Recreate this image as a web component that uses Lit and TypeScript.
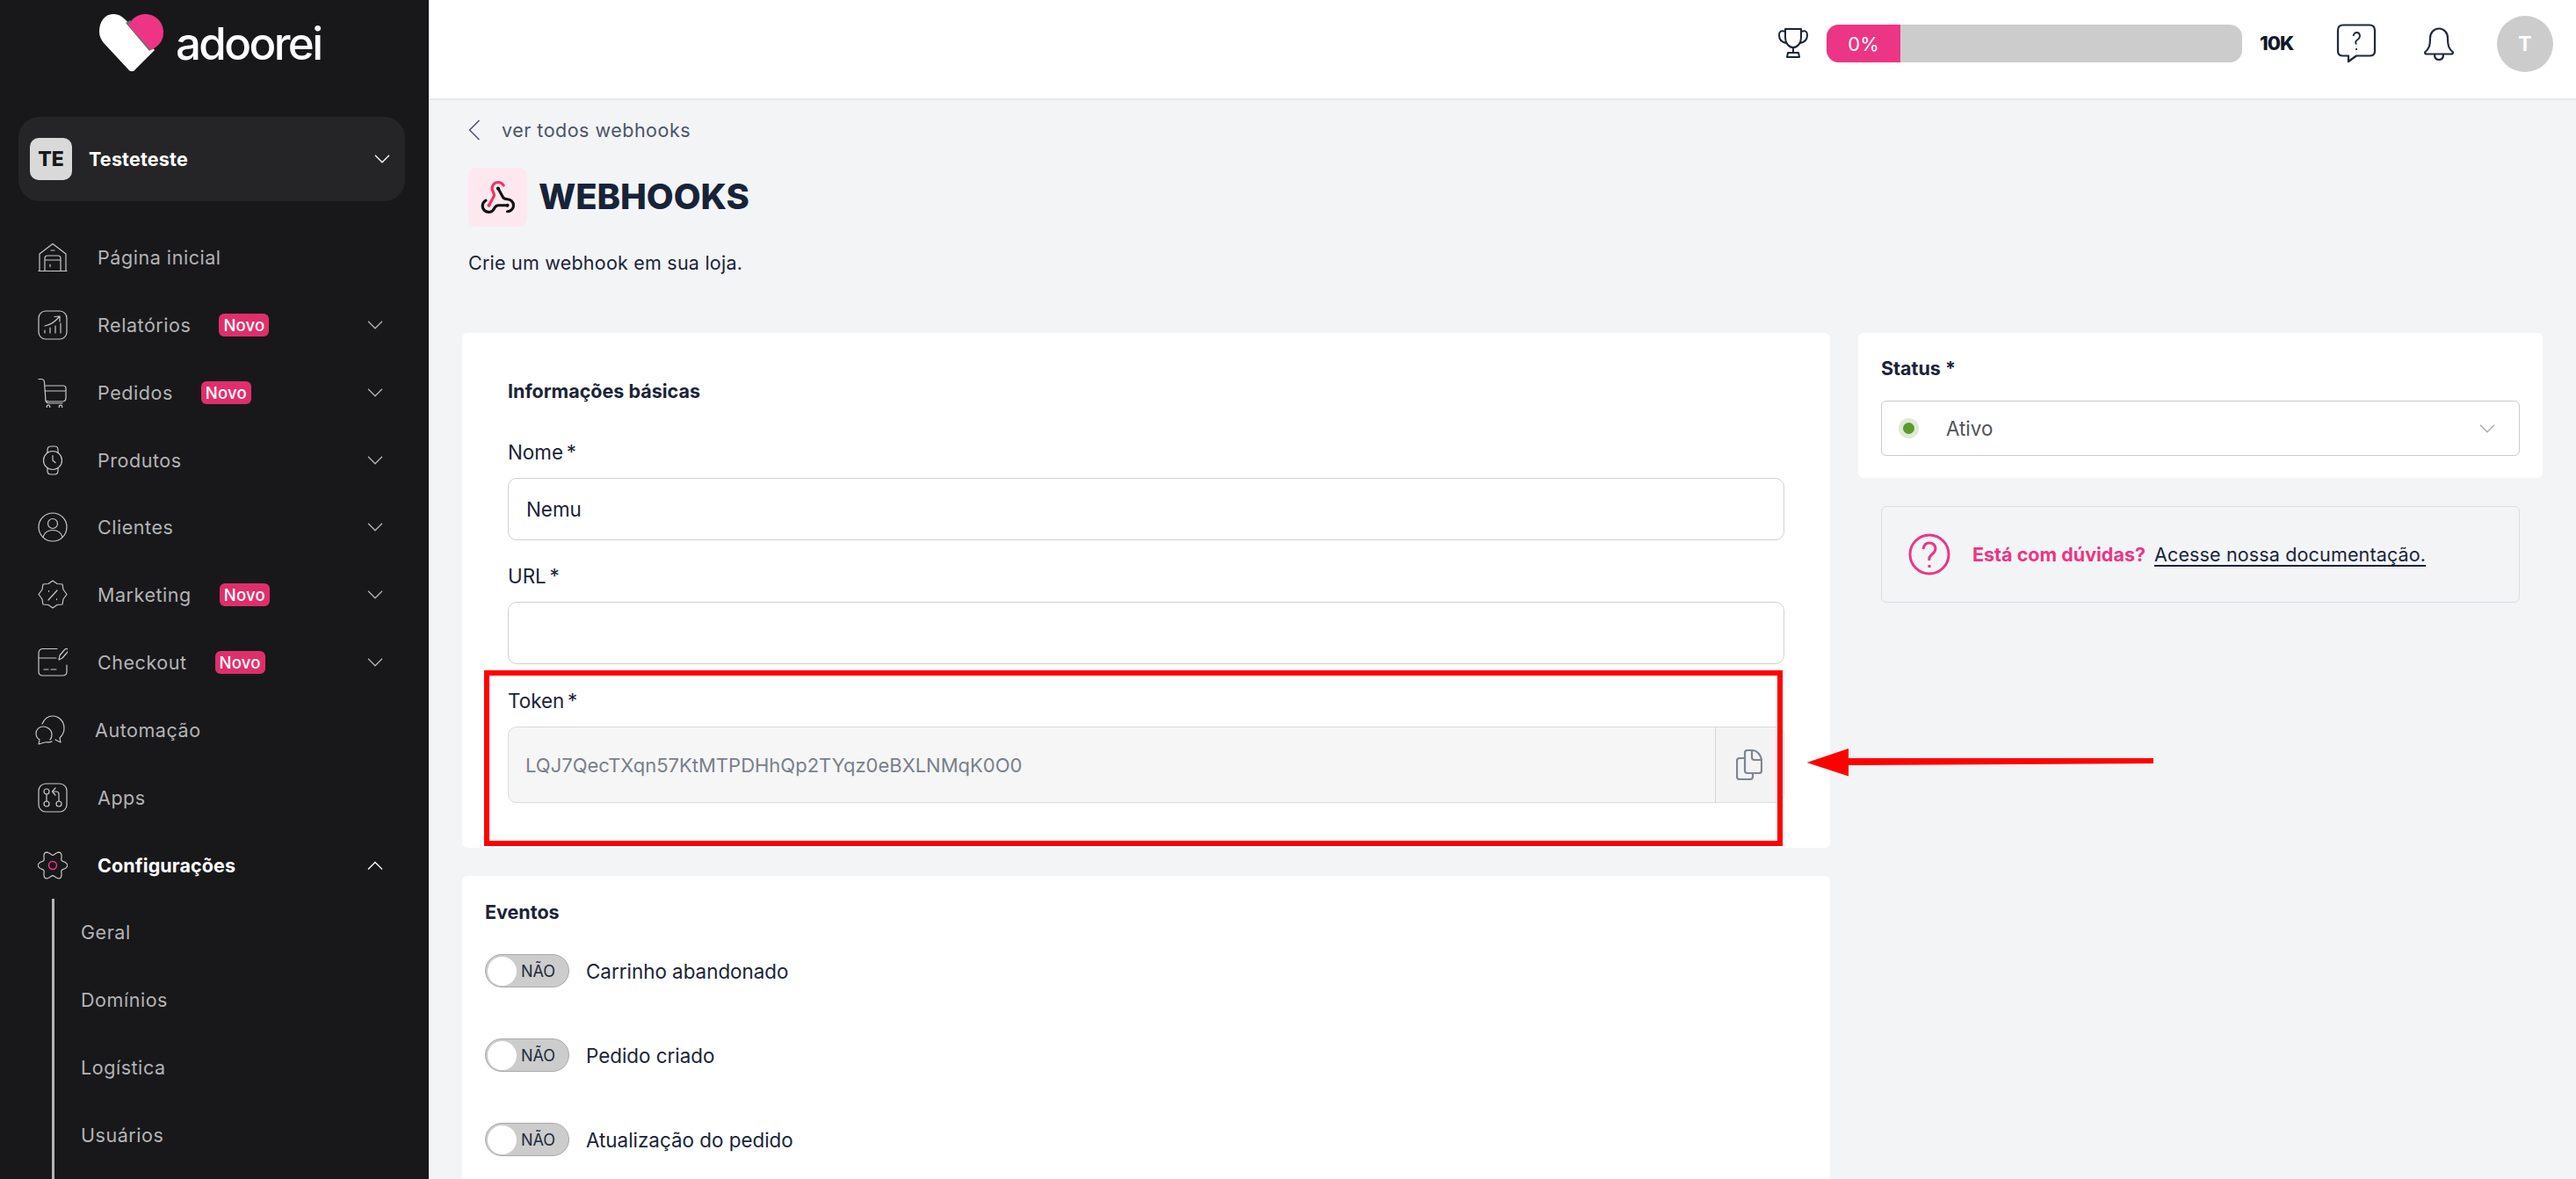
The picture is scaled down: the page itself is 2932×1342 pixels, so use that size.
import { LitElement, html, css, svg } from "lit";
import { customElement } from "lit/decorators.js";

const chev = (cls: string, up = false) => html`<svg class=${cls} viewBox="0 0 18 10" fill="none" stroke="currentColor" stroke-width="1.3"><path d=${up ? "M1 9.5 9 1.5l8 8" : "M1 .8l8 8 8-8"}/></svg>`;

const cogPath = () => {
  const pts: string[] = [];
  for (let d = 0; d < 360; d += 5) {
    const a = (d * Math.PI) / 180;
    const r = 14.2 + 2.6 * Math.cos(6 * a);
    pts.push(`${(17 + r * Math.cos(a)).toFixed(2)} ${(17 + r * Math.sin(a)).toFixed(2)}`);
  }
  return "M" + pts.join("L") + "Z";
};

const icons: Record<string, any> = {
  home: svg`<path d="M1 32.5h32M2 32.5V13L17 1.5 32 13v19.5"/><path d="M15 9h4M8 32.5V18q0-3 3-3h12q3 0 3 3v14.5M8 20h18M14 25v2.5"/>`,
  chart: svg`<rect x="1" y="1" width="32" height="32" rx="8"/><path d="M8 26v-3M14 26v-6M20 26v-8M26 26V15M8 18c6-1 11-4 16-10M19 7.500l6-.5v6"/>`,
  cart: svg`<path d="M1 1.500h3q3 0 3.500 3.500L9 26q.5 3 4 3h15M8 9h21q3 0 3 3v11q0 4-4 4H13q-4 0-4.500-2M8 15h24"/><circle cx="12" cy="33" r="1.800"/><circle cx="26" cy="33" r="1.800"/>`,
  watch: svg`<circle cx="17" cy="17" r="10.500"/><path d="M17 11.500V17l3 2.500M11 8.500V5q0-4 4-4h4q4 0 4 4v3.500M11 25.500V29q0 4 4 4h4q4 0 4-4v-3.500"/>`,
  user: svg`<circle cx="17" cy="17" r="16"/><circle cx="17" cy="13" r="5.500"/><path d="M6 28c2-6 6-7.500 11-7.500s9 1.500 11 7.500"/>`,
  badge: svg`<path d="M17 1l5 3.500 6 .5 1 6 4 5.500-4 5.500-1 6-6 .5-5 3.500-5-3.500-6-.5-1-6-4-5.500 4-5.500 1-6 6-.5z"/><path d="M12 23l10-11M12.500 12.500v.8M21.500 21.800v.8"/>`,
  card: svg`<path d="M22 1.500H6Q1 1.500 1 6.500v21q0 4.500 5 4.500h22q5 0 5-4.500V20M1 12h20M7 25h5M15 25h6M24 14l1-5 6-7q2-1.500 3 0t0 3l-6 7z"/>`,
  chat: svg`<path d="M8 10C11 3 16 1 20 1c7 0 13 6 13 14 0 5-2 8-5 11l1 5-6-3M19 30C16 32 12 30 11 31l-7 2 1-5c-3-2-4-5-4-7 0-5 4-8 8-8s10 3 10 9c0 3-1 5-2 6"/>`,
  apps: svg`<rect x="1" y="1" width="32" height="32" rx="8"/><circle cx="10" cy="10" r="3"/><circle cx="10" cy="24" r="3"/><circle cx="24" cy="24" r="3"/><path d="M10 13v8M24 21v-8q0-3-3-3h-3M20 6l-3.500 4 3.500 4"/>`,
  cog: svg`<path d=${cogPath()}/>`,
};

const ic = (n: string) => html`<svg class="ic" viewBox="0 0 34 34" fill="none" stroke="currentColor" stroke-width="1.200" stroke-linecap="round" stroke-linejoin="round">${icons[n]}${n === "cog" ? svg`<circle cx="17" cy="17" r="4.500" stroke="#ec3585" stroke-width="1.500"/>` : ""}</svg>`;

const nav = [
  { t: "Página inicial", i: "home" },
  { t: "Relatórios", i: "chart", novo: true, more: true },
  { t: "Pedidos", i: "cart", novo: true, more: true },
  { t: "Produtos", i: "watch", more: true },
  { t: "Clientes", i: "user", more: true },
  { t: "Marketing", i: "badge", novo: true, more: true },
  { t: "Checkout", i: "card", novo: true, more: true },
  { t: "Automação", i: "chat", nudge: true },
  { t: "Apps", i: "apps" },
];
const sub = ["Geral", "Domínios", "Logística", "Usuários"];
const events = ["Carrinho abandonado", "Pedido criado", "Atualização do pedido"];

@customElement("app-root")
export class AppRoot extends LitElement {
  static styles = css`
    :host { display: block; width: 2932px; height: 1342px; overflow: hidden; font-family: "Inter", sans-serif; color: #1a2438; background: #f3f4f6; }
    * { box-sizing: border-box; }
    .page { display: flex; height: 1342px; }
    .side { width: 488px; flex: none; background: #18181b; display: flex; flex-direction: column; height: 1342px; overflow: hidden; color: #b4b4b4; }
    .logo { height: 133px; flex: none; display: flex; align-items: flex-start; padding: 14px 0 0 113px; gap: 13px; }
    .logo svg { width: 74px; height: 70px; }
    .logo span { font-size: 51px; font-weight: 500; color: #fff; letter-spacing: -2.6px; line-height: 70px; margin-top: 1px; }
    .acct { margin-left: 21px; width: 440px; height: 96px; flex: none; background: #252528; border-radius: 24px; display: flex; align-items: center; padding: 0 17px 0 13px; color: #fff; }
    .av { width: 48px; height: 48px; border-radius: 10px; background: #d9d9d9; color: #18181b; font-weight: 800; font-size: 23px; display: flex; align-items: center; justify-content: center; }
    .acct b { margin-left: 19px; font-size: 21.500px; font-weight: 700; letter-spacing: .2px; }
    .cv { width: 18px; height: 10px; margin-left: auto; flex: none; }
    nav { margin-top: 25.6px; flex: 1; display: flex; flex-direction: column; min-height: 0; }
    .item { height: 76.85px; flex: none; display: flex; align-items: center; padding: 0 52px 0 43px; font-size: 21.5px; font-weight: 400; letter-spacing: .55px; }
    .item.nudge { padding-left: 40px; }
    .ic { width: 34px; height: 34px; flex: none; margin-right: 34px; color: #c9c9c9; }
    .novo { margin-left: 32px; background: #df2f6b; color: #fff; height: 26px; width: 57px; border-radius: 6px; font-size: 18.500px; font-weight: 500; display: flex; align-items: center; justify-content: center; letter-spacing: .2px; }
    .act { color: #fff; font-weight: 700; letter-spacing: .12px; }
    .sub { flex: 1; margin-left: 59px; border-left: 3px solid #b4b4b4; padding-left: 30px; }
    .sub div { height: 76.85px; display: flex; align-items: center; font-size: 21.500px; letter-spacing: .55px; }
    .main { flex: 1; min-width: 0; display: flex; flex-direction: column; }
    .top { height: 114px; flex: none; background: #fff; border-bottom: 2px solid #e8e9ec; display: flex; align-items: flex-start; padding-left: 1536px; position: relative; }
    .trophy { width: 34px; height: 36px; margin-top: 31px; color: #1a2438; }
    .bar { margin: 28px 0 0 21px; width: 473px; height: 43px; border-radius: 14px; background: #ccc; overflow: hidden; }
    .bar div { width: 84px; height: 43px; background: #ec3585; color: #fff; font-size: 22px; display: flex; align-items: center; justify-content: center; }
    .ten { margin: 35px 0 0 20px; width: 40px; font-size: 22px; font-weight: 800; line-height: 28px; letter-spacing: -1px; color: #111827; }
    .q { width: 46px; height: 45px; margin: 27px 0 0 47px; }
    .bell { width: 36px; height: 38px; margin: 31px 0 0 53px; }
    .me { width: 64px; height: 64px; margin: 18px 0 0 48px; border-radius: 50%; background: #ccc; color: #fff; font-weight: 700; font-size: 23px; display: flex; align-items: center; justify-content: center; }
    .content { flex: 1; min-height: 0; padding: 0 38px; overflow: hidden; }
    .back { margin: 22px 0 0 7px; height: 24px; display: flex; align-items: center; font-size: 21.500px; color: #4a5568; letter-spacing: .5px; }
    .back svg { width: 14px; height: 24px; margin-right: 24px; }
    .title { margin: 31px 0 0 7px; display: flex; align-items: center; gap: 13px; }
    .hk { width: 67px; height: 67px; background: #fde8ef; border-radius: 8px; display: flex; align-items: center; justify-content: center; }
    .hk svg { width: 42px; height: 42px; }
    h1 { margin: -2px 0 0; font-size: 40px; line-height: 50px; font-weight: 800; color: #172338; letter-spacing: -.1px; }
    .desc { margin: 26px 0 0 7px; font-size: 21.500px; line-height: 30px; letter-spacing: .22px; }
    .grid { margin-top: 65px; display: grid; grid-template-columns: 1557px 779px; gap: 32px; align-items: start; }
    .col { display: flex; flex-direction: column; gap: 32px; }
    .card { background: #fff; border-radius: 6px; position: relative; }
    .info { padding: 51px 52px; }
    h3 { margin: 0; font-size: 21.500px; line-height: 30px; font-weight: 700; color: #1a2438; }
    label { display: block; font-size: 22.400px; line-height: 30px; word-spacing: -2.5px; }
    .nome { margin-top: 40px; }
    .url { margin-top: 26px; }
    .tok { margin-top: 27px; }
    .in { height: 71px; border: 1.500px solid #cfd1d4; border-radius: 10px; display: flex; align-items: center; padding-left: 20px; font-size: 22.400px; margin-top: 14px; }
    .tokbox { height: 87px; border: 1.500px solid #dcdcdc; border-radius: 10px; background: #f6f6f6; display: flex; margin-top: 14px; overflow: hidden; color: #7a7f8a; font-size: 22px; }
    .tokbox span { flex: 1; display: flex; align-items: center; padding-left: 19px; }
    .copy { width: 78px; border-left: 1.500px solid #d5d5d5; display: flex; align-items: center; justify-content: center; background: #f3f3f3; }
    .copy svg { width: 30px; height: 35px; margin-right: 2px; }
    .red { position: absolute; left: 25px; top: 384px; width: 1478px; height: 200px; border: 6px solid #ff0000; pointer-events: none; }
    .ev { padding: 26px 26px 60px; height: 500px; }
    .row { display: flex; align-items: center; height: 38px; margin-bottom: 58px; font-size: 22.400px; }
    .row:first-of-type { margin-top: 33px; }
    .tg { width: 96px; height: 38px; border-radius: 19px; background: #ccc; border: 1.500px solid #aaa; display: flex; align-items: center; padding-left: 2px; margin-right: 19px; font-size: 18px; color: #1f2a3c; }
    .tg i { width: 33px; height: 33px; border-radius: 50%; background: #fff; margin-right: 5px; flex: none; }
    .st { padding: 25px 26px 25px; }
    .sel { height: 63px; margin-top: 22px; border: 1.500px solid #cbcbcb; border-radius: 6px; display: flex; align-items: center; padding: 0 27px 0 19px; color: #52525b; font-size: 22.400px; }
    .dot { width: 23px; height: 23px; border-radius: 50%; background: #dfe9d6; display: flex; align-items: center; justify-content: center; margin-right: 31px; }
    .dot i { width: 13px; height: 13px; border-radius: 50%; background: #5b9a2a; }
    .sel .cv { color: #a8a8a8; }
    .help { margin: 0 26px; height: 110px; border: 1.500px solid #dcdee1; border-radius: 6px; display: flex; align-items: center; padding-left: 30px; font-size: 21.500px; }
    .help svg { width: 48px; height: 48px; margin-right: 25px; }
    .help b { color: #ec3585; font-weight: 700; margin-right: 10px; }
    .help a { color: #1a2438; text-decoration: underline; text-underline-offset: 4px; letter-spacing: .15px; }
    .arrow { position: absolute; left: 2050px; top: 845px; width: 410px; height: 45px; pointer-events: none; }
  `;

  render() {
    return html`<div class="page">
      <aside class="side">
        <div class="logo">
          <svg viewBox="113 14 74 70"><path fill="#fff" d="M129 16C119 16 113 25 113 36c0 6 3 11 7 15l26 28c2 3 6 3 8 0l22-22-30-31c-5-6-10-10-17-10z"/><path fill="#6b6b6e" d="M143 26l5-3 26 32-4 3z"/><path fill="#ec3585" d="M146 29c4-8 11-13 19-13 12 0 21 9 21 21 0 10-6 16-14 20z"/></svg>
          <span>adoorei</span>
        </div>
        <div class="acct"><div class="av">TE</div><b>Testeteste</b>${chev("cv")}</div>
        <nav>
          ${nav.map((n) => html`<div class="item ${n.nudge ? "nudge" : ""}">${ic(n.i)}<span>${n.t}</span>${n.novo ? html`<span class="novo">Novo</span>` : ""}${n.more ? chev("cv") : ""}</div>`)}
          <div class="item act">${ic("cog")}<span>Configurações</span>${chev("cv", true)}</div>
          <div class="sub">${sub.map((s) => html`<div>${s}</div>`)}</div>
        </nav>
      </aside>
      <div class="main">
        <header class="top">
          <svg class="trophy" viewBox="0 0 34 36" fill="none" stroke="currentColor" stroke-width="2" stroke-linecap="round" stroke-linejoin="round"><path d="M8 2h18v10c0 6-4 11-9 11S8 18 8 12zM8 5C3 3 1 5 1 9c0 5 3 8 8 9M26 5c5-2 7 0 7 4 0 5-3 8-8 9M17 23v6M11 29h12l1 5H10z"/></svg>
          <div class="bar"><div>0%</div></div>
          <div class="ten">10K</div>
          <svg class="q" viewBox="0 0 46 45" fill="none" stroke="#1e293b" stroke-width="2.200" stroke-linejoin="round"><path d="M8 1.500h30q6 0 6 6v24q0 5-6 5H23L14 43v-6.500H8q-6 0-6-5v-24q0-6 6-6z"/><path d="M19.500 14q1-4 4-4t3.500 3.500q0 3-3 5t-1 5M23 28v2" stroke-width="1.800"/></svg>
          <svg class="bell" viewBox="0 0 36 38" fill="none" stroke="#1e293b" stroke-width="2.200" stroke-linejoin="round"><path d="M18 1.500c-6 0-10 5-10 11 0 8-1 12-6 16 0 1 1 2 2 2h28c1 0 2-1 2-2-5-4-6-8-6-16 0-6-4-11-10-11zM13 31q0 6 5 6t5-6"/></svg>
          <div class="me">T</div>
        </header>
        <div class="content">
          <div class="back"><svg viewBox="0 0 14 24" fill="none" stroke="currentColor" stroke-width="1.500"><path d="M12.500 1 1.500 12l11 11"/></svg>ver todos webhooks</div>
          <div class="title">
            <div class="hk"><svg viewBox="0 0 24 24" fill="none" stroke="#111" stroke-width="1.800" stroke-linecap="round" stroke-linejoin="round"><path d="M18 17h-6c-1.100 0-1.950.940-2.480 1.900A4 4 0 1 1 4 13.800"/><path stroke="#ec3565" d="m6 17 3.130-5.780c.530-.970.100-2.180-.500-3.100a4 4 0 1 1 6.890-4.060"/><path d="m12 6 3.130 5.730C15.660 12.700 16.900 13 18 13a4 4 0 0 1 0 8"/><circle cx="6" cy="17" r="1.200" fill="#ec3565" stroke="none"/><circle cx="18" cy="17" r="1.200" fill="#111" stroke="none"/><circle cx="12" cy="6" r="1.200" fill="#111" stroke="none"/></svg></div>
            <h1>WEBHOOKS</h1>
          </div>
          <p class="desc">Crie um webhook em sua loja.</p>
          <div class="grid">
            <div class="col">
              <section class="card info">
                <h3>Informações básicas</h3>
                <label class="nome">Nome *</label><div class="in">Nemu</div>
                <label class="url">URL *</label><div class="in"></div>
                <label class="tok">Token *</label>
                <div class="tokbox"><span>LQJ7QecTXqn57KtMTPDHhQp2TYqz0eBXLNMqK0O0</span>
                  <div class="copy"><svg viewBox="0 0 30 35" fill="none" stroke="#7d8592" stroke-width="2.200" stroke-linejoin="round"><path d="M10 10H4q-3 0-3 3v18q0 3 3 3h12q3 0 3-3v-4"/><path d="M10 4q0-3 3-3h5c6 0 11 6 11 12v11q0 3-3 3H13q-3 0-3-3zM18 1v8q0 3 3 3h8"/></svg></div>
                </div>
                <div class="red"></div>
              </section>
              <section class="card ev">
                <h3>Eventos</h3>
                ${events.map((e) => html`<div class="row"><div class="tg"><i></i>NÃO</div>${e}</div>`)}
              </section>
            </div>
            <div class="col">
              <section class="card st">
                <h3>Status *</h3>
                <div class="sel"><span class="dot"><i></i></span>Ativo${chev("cv")}</div>
              </section>
              <div class="help">
                <svg viewBox="0 0 48 48" fill="none" stroke="#ec3585" stroke-width="3"><circle cx="24" cy="24" r="22"/><path d="M17 18q1-7 7-7t7 6q0 4-4 7t-3 7M24 36v3"/></svg>
                <b>Está com dúvidas?</b><a href="#">Acesse nossa documentação.</a>
              </div>
            </div>
          </div>
        </div>
      </div>
      <svg class="arrow" viewBox="2050 845 410 45"><path fill="#ff0000" d="M2451 863h-347v-11l-47.500 16 47.500 15.500V871l347-2z"/></svg>
    </div>`;
  }
}
